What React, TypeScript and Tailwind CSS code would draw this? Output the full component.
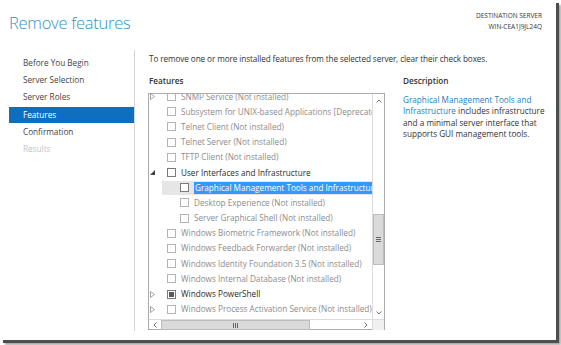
import React from "react";

type Row = {
  label: string;
  level: 1 | 2;
  exp?: "collapsed" | "expanded";
  tone: "gray" | "dark" | "selected";
  check?: "empty" | "partial";
};

const rows: Row[] = [
  { label: "SNMP Service (Not installed)", level: 1, exp: "collapsed", tone: "gray" },
  { label: "Subsystem for UNIX-based Applications [Deprecated] (Not installed)", level: 1, tone: "gray" },
  { label: "Telnet Client (Not installed)", level: 1, tone: "gray" },
  { label: "Telnet Server (Not installed)", level: 1, tone: "gray" },
  { label: "TFTP Client (Not installed)", level: 1, tone: "gray" },
  { label: "User Interfaces and Infrastructure", level: 1, exp: "expanded", tone: "dark" },
  { label: "Graphical Management Tools and Infrastructure", level: 2, tone: "selected" },
  { label: "Desktop Experience (Not installed)", level: 2, tone: "gray" },
  { label: "Server Graphical Shell (Not installed)", level: 2, tone: "gray" },
  { label: "Windows Biometric Framework (Not installed)", level: 1, tone: "gray" },
  { label: "Windows Feedback Forwarder (Not installed)", level: 1, tone: "gray" },
  { label: "Windows Identity Foundation 3.5 (Not installed)", level: 1, tone: "gray" },
  { label: "Windows Internal Database (Not installed)", level: 1, tone: "gray" },
  { label: "Windows PowerShell", level: 1, exp: "collapsed", tone: "dark", check: "partial" },
  { label: "Windows Process Activation Service (Not installed)", level: 1, exp: "collapsed", tone: "gray" },
  { label: "Windows Search Service (Not installed)", level: 1, tone: "gray" },
];

function Expander({ exp }: { exp?: "collapsed" | "expanded" }) {
  if (exp === "expanded")
    return (
      <svg width="5" height="5" viewBox="0 0 5 5" className="ml-[1px]">
        <path d="M5 0 L5 5 L0 5 Z" fill="#404040" />
      </svg>
    );
  if (exp === "collapsed")
    return (
      <svg width="5" height="7" viewBox="0 0 5 7" className="ml-[1px]">
        <path d="M0.5 0.5 L4.5 3.5 L0.5 6.5 Z" fill="none" stroke="#9a9a9a" strokeWidth="0.9" />
      </svg>
    );
  return null;
}

function FeatureRow({ r }: { r: Row }) {
  const textCls =
    r.tone === "gray"
      ? "text-[#8c8c8c]"
      : r.tone === "dark"
      ? "text-[#2b2b2b]"
      : "text-white bg-[#3399ff] px-[1px] -ml-[1px]";
  const boxBorder = r.tone === "gray" ? "border-[#b4b4b4]" : "border-[#7a7a7a]";
  return (
    <div className="flex h-[15.2px] items-center whitespace-nowrap">
      {r.level === 2 && <div className="w-[13px] shrink-0" />}
      <div
        className={
          "flex h-[14px] flex-1 items-center " + (r.tone === "selected" ? "bg-[#e6e6e6]" : "")
        }
      >
        <div className="flex w-[18px] shrink-0 items-center">
          <Expander exp={r.exp} />
        </div>
        <div
          className={
            "flex h-[9px] w-[9px] shrink-0 items-center justify-center border bg-white " + boxBorder
          }
        >
          {r.check === "partial" && <div className="h-[5px] w-[5px] bg-[#5a5a5a]" />}
        </div>
        <span className={"ml-[5px] leading-[12px] " + textCls}>{r.label}</span>
      </div>
    </div>
  );
}

export default function App() {
  const font = { fontFamily: '"Open Sans", "Noto Sans", sans-serif' };
  return (
    <div className="h-[345px] w-[561px] overflow-hidden bg-white" style={font}>
      <div className="flex h-[340px] w-[556px] flex-col bg-white shadow-[3px_3px_0_#4d4d4d,5px_5px_2px_#a8a8a8]">
        {/* header */}
        <div className="flex h-[50px] shrink-0 justify-between">
          <h1 className="pl-[9px] pt-[12px] text-[16.5px] font-light leading-[22px] tracking-[-0.25px] text-[#3590c6]">
            Remove features
          </h1>
          <div className="pr-[14px] pt-[10px] text-right text-[6.5px] leading-[11px] text-[#333]">
            <div>DESTINATION SERVER</div>
            <div>WIN-CEA1J9JL24Q</div>
          </div>
        </div>

        {/* body */}
        <div className="flex h-[281px] shrink-0 text-[8.2px] text-[#333]">
          {/* nav */}
          <nav className="w-[135px] shrink-0 border-r border-[#d4d4d4] pt-[4px]">
            {[
              ["Before You Begin", ""],
              ["Server Selection", ""],
              ["Server Roles", ""],
              ["Features", "active"],
              ["Confirmation", ""],
              ["Results", "disabled"],
            ].map(([t, s]) => (
              <div key={t} className="flex h-[17.4px] items-center">
                <div
                  className={
                    "ml-[9px] flex h-[16px] w-[125px] items-center pl-[14px] " +
                    (s === "active"
                      ? "bg-[#0e6ebf] text-white"
                      : s === "disabled"
                      ? "text-[#c4c4c4]"
                      : "text-[#444]")
                  }
                >
                  {t}
                </div>
              </div>
            ))}
          </nav>

          {/* main */}
          <div className="flex flex-1 flex-col pl-[13px]">
            <p className="ml-[1px] whitespace-nowrap pt-[3px] leading-[11px] tracking-[-0.1px]">
              To remove one or more installed features from the selected server, clear their check boxes.
            </p>
            <div className="mt-[11px] flex flex-1">
              {/* features column */}
              <div className="flex w-[237px] shrink-0 flex-col">
                <div className="ml-[1px] font-semibold leading-[11px] text-[#333]">Features</div>
                <div className="mt-[7px] flex h-[237px] flex-col border border-[#ababab]">
                  <div className="flex h-[225px]">
                    <div className="flex-1 overflow-hidden">
                      <div className="-mt-[5px]">
                        {rows.map((r) => (
                          <FeatureRow key={r.label} r={r} />
                        ))}
                      </div>
                    </div>
                    {/* vertical scrollbar */}
                    <div className="flex w-[12px] shrink-0 flex-col border-l border-[#dcdcdc] bg-white">
                      <div className="flex h-[13px] items-center justify-center">
                        <svg width="6" height="4" viewBox="0 0 6 4">
                          <path d="M0.5 3.5 L3 1 L5.5 3.5" fill="none" stroke="#606060" strokeWidth="0.9" />
                        </svg>
                      </div>
                      <div className="h-[107px]" />
                      <div className="flex h-[51px] items-center justify-center border border-[#bdbdbd] bg-[#dadada]">
                        <div className="flex flex-col gap-[1px]">
                          <div className="h-[1px] w-[5px] bg-[#666]" />
                          <div className="h-[1px] w-[5px] bg-[#666]" />
                          <div className="h-[1px] w-[5px] bg-[#666]" />
                        </div>
                      </div>
                      <div className="flex-1" />
                      <div className="flex h-[13px] items-center justify-center">
                        <svg width="6" height="4" viewBox="0 0 6 4">
                          <path d="M0.5 0.5 L3 3 L5.5 0.5" fill="none" stroke="#606060" strokeWidth="0.9" />
                        </svg>
                      </div>
                    </div>
                  </div>
                  {/* horizontal scrollbar */}
                  <div className="flex h-[11px] shrink-0 border-t border-[#dcdcdc]">
                    <div className="flex w-[12px] items-center justify-center">
                      <svg width="4" height="6" viewBox="0 0 4 6">
                        <path d="M3.5 0.5 L1 3 L3.5 5.5" fill="none" stroke="#606060" strokeWidth="0.9" />
                      </svg>
                    </div>
                    <div className="flex w-[149px] items-center justify-center border border-[#bdbdbd] bg-[#dadada]">
                      <div className="flex gap-[1px]">
                        <div className="h-[5px] w-[1px] bg-[#666]" />
                        <div className="h-[5px] w-[1px] bg-[#666]" />
                        <div className="h-[5px] w-[1px] bg-[#666]" />
                      </div>
                    </div>
                    <div className="flex-1" />
                    <div className="flex w-[12px] items-center justify-center">
                      <svg width="4" height="6" viewBox="0 0 4 6">
                        <path d="M0.5 0.5 L3 3 L0.5 5.5" fill="none" stroke="#606060" strokeWidth="0.9" />
                      </svg>
                    </div>
                    <div className="w-[12px] border-l border-[#dcdcdc] bg-[#f0f0f0]" />
                  </div>
                </div>
              </div>

              {/* description column */}
              <div className="ml-[18px] flex-1">
                <div className="font-semibold leading-[11px] text-[#333]">Description</div>
                <p className="mt-[8px] whitespace-nowrap leading-[11.3px] text-[#333]">
                  <span className="text-[#1f80be]">Graphical Management Tools and</span>
                  <br />
                  <span className="text-[#1f80be]">Infrastructure</span> includes infrastructure
                  <br />
                  and a minimal server interface that
                  <br />
                  supports GUI management tools.
                </p>
              </div>
            </div>
          </div>
        </div>
      </div>
    </div>
  );
}
